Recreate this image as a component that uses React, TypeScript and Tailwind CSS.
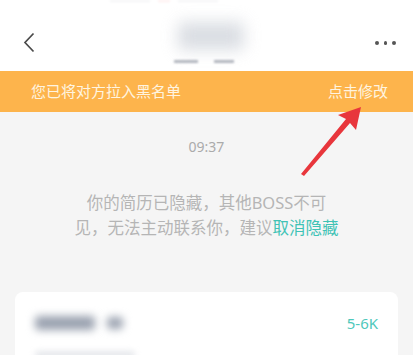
import React from "react";

const font = { fontFamily: '"Noto Sans", "Noto Sans CJK SC", sans-serif' };

function RedArrow() {
  // annotation arrow drawn on top of the screenshot
  return (
    <svg
      className="absolute left-0 top-0 pointer-events-none"
      width="413"
      height="355"
      viewBox="0 0 413 355"
    >
      <polygon
        points="361,107 356,130 350,123 304,176 301,174 346,119 338,115"
        fill="#e8363c"
      />
    </svg>
  );
}

export default function App() {
  return (
    <div className="relative w-[413px] h-[355px] overflow-hidden bg-[#f5f5f5]" style={font}>
      {/* header */}
      <div className="relative h-[71px] bg-white">
        <div className="absolute left-[110px] top-0 flex gap-2 opacity-10">
          <div className="h-[2px] w-[40px] bg-gray-400 blur-[1px]" />
          <div className="h-[2px] w-[12px] bg-red-400 blur-[1px]" />
          <div className="h-[2px] w-[40px] bg-gray-400 blur-[1px]" />
        </div>
        <svg className="absolute left-[22px] top-[32px]" width="14" height="21" viewBox="0 0 14 21">
          <path d="M11.5 1.5 L3 10.5 L11.5 19.5" fill="none" stroke="#4a4a4a" strokeWidth="1.7" />
        </svg>
        <div className="absolute left-[178px] top-[22px] h-[28px] w-[66px] rounded bg-gray-300 blur-[8px] opacity-80" />
        <div className="absolute left-[174px] top-[60px] flex gap-4 items-center">
          <div className="h-[3px] w-[24px] bg-gray-500 blur-[1px] opacity-50" />
          <div className="h-[3px] w-[20px] bg-gray-500 blur-[1px] opacity-50" />
        </div>
        <div className="absolute left-[375px] top-[41px] flex gap-[5px]">
          <span className="h-[3.5px] w-[3.5px] rounded-full bg-[#555]" />
          <span className="h-[3.5px] w-[3.5px] rounded-full bg-[#555]" />
          <span className="h-[3.5px] w-[3.5px] rounded-full bg-[#555]" />
        </div>
      </div>

      {/* blacklist banner */}
      <div className="flex h-[41px] items-center justify-between bg-[#fdb44c] pl-[31px] pr-[25px] text-[15px] text-[#fff4e0]">
        <span>您已将对方拉入黑名单</span>
        <span>点击修改</span>
      </div>

      {/* chat area */}
      <div className="flex flex-col items-center">
        <div className="mt-[24px] text-[14px] text-[#ababab]">09:37</div>
        <div className="mt-[33px] text-center text-[16.5px] leading-[25px] text-[#b5b5b5]">
          你的简历已隐藏，其他BOSS不可
          <br />
          见，无法主动联系你，建议<span className="text-[#3fc3b5]">取消隐藏</span>
        </div>
      </div>

      {/* job card */}
      <div className="mx-[15px] mt-[52px] h-[80px] rounded-lg bg-white px-[20px] pt-[20px]">
        <div className="flex items-center justify-between">
          <div className="flex items-center gap-3">
            <div className="h-[14px] w-[60px] rounded bg-gray-400 blur-[4px]" />
            <div className="h-[12px] w-[16px] rounded bg-gray-400 blur-[4px]" />
          </div>
          <span className="text-[15px] text-[#4fc8bb]">5-6K</span>
        </div>
        <div className="mt-[16px] h-[8px] w-[100px] rounded bg-gray-200 blur-[3px]" />
      </div>

      <RedArrow />
    </div>
  );
}
